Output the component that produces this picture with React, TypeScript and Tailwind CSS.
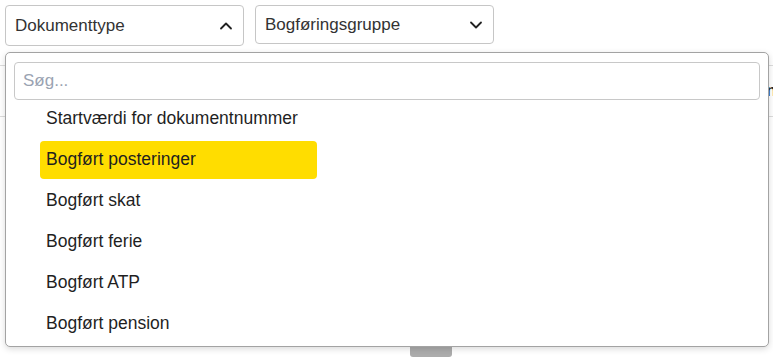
import { ChevronDown, ChevronUp } from "lucide-react";

const items = [
  "Startværdi for dokumentnummer",
  "Bogført posteringer",
  "Bogført skat",
  "Bogført ferie",
  "Bogført ATP",
  "Bogført pension",
];

export default function App() {
  return (
    <div
      className="relative h-[358px] w-[773px] overflow-hidden bg-white text-[17px] text-[#1f1f1f]"
      style={{ fontFamily: '"Liberation Sans", Arial, sans-serif' }}
    >
      {/* filter row */}
      <div className="flex gap-[11px] px-[5px] pt-[5px]">
        <button
          type="button"
          className="flex h-[41px] w-[239px] items-center justify-between rounded-[4px] border border-[#c6c6c6] pl-[9px] pr-[7px] text-[#333]"
        >
          Dokumenttype
          <ChevronUp className="size-[20px]" strokeWidth={2.2} color="#222" />
        </button>
        <button
          type="button"
          className="flex h-[39px] w-[239px] items-center justify-between rounded-[4px] border border-[#c6c6c6] pl-[9px] pr-[7px] text-[#333]"
        >
          Bogføringsgruppe
          <ChevronDown className="size-[20px]" strokeWidth={2.2} color="#222" />
        </button>
      </div>

      {/* table behind the dropdown */}
      <div className="mt-[19px] grid h-[52px] grid-cols-[766px_1fr] items-center border-y border-[#dcdcdc] font-bold">
        <span />
        <span className="whitespace-nowrap">nr.</span>
      </div>
      <div className="mt-[220px] pl-[410px]">
        <div className="flex h-[20px] w-[42px] justify-center rounded-[3px] bg-[#acacac]">
          <div className="mt-[6px] h-[4px] w-[12px] rounded-b-[3px] bg-[#e6e6e6]" />
        </div>
      </div>

      {/* dropdown panel */}
      <div className="absolute left-[5px] top-[52px] h-[295px] w-[764px] overflow-hidden rounded-[5px] border border-[#a3a3a3] bg-white px-[8px] pt-[9px] shadow-[0_2px_6px_rgba(0,0,0,0.15)]">
        <input
          placeholder="Søg..."
          className="block h-[38px] w-full rounded-[4px] border border-[#c8c8c8] px-[8px] text-[17px] outline-none placeholder:text-[#9aa3b2]"
        />
        <ul className="-mt-[2px] pl-[26px] text-[17.5px]">
          {items.map((item, i) => (
            <li key={item} className="flex h-[41px] items-center">
              <div
                className={
                  i === 1
                    ? "flex h-[38px] w-[277px] items-center rounded-[4px] bg-[#ffdd00] px-[6px]"
                    : "flex h-[38px] items-center px-[6px]"
                }
              >
                {item}
              </div>
            </li>
          ))}
        </ul>
      </div>
    </div>
  );
}
